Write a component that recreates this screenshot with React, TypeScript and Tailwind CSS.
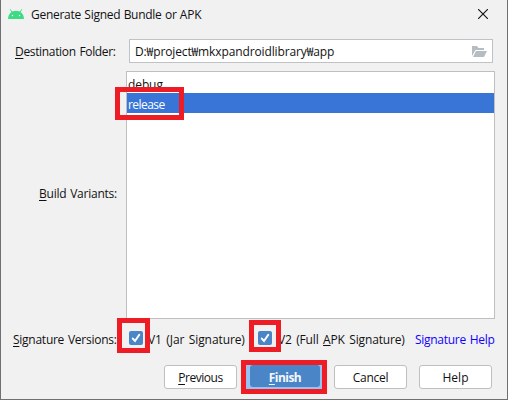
import type { ReactNode } from "react";

function Label({ k, children, className = "" }: { k?: string; children?: ReactNode; className?: string }) {
  return (
    <span className={"block whitespace-nowrap " + className}>
      {k && <u className="underline decoration-1 underline-offset-2">{k}</u>}
      {children}
    </span>
  );
}

function Check({ className = "" }: { className?: string }) {
  return (
    <span className={"block size-[14px] shrink-0 rounded-[2px] bg-[#4a86c7] " + className}>
      <svg viewBox="0 0 14 14" className="size-[14px]" fill="none" stroke="#fff" strokeWidth="2" strokeLinecap="round">
        <path d="M3.800 7.600 6 10 10.300 3.800" />
      </svg>
    </span>
  );
}

const btn = "flex h-6 w-[73px] shrink-0 items-center justify-center rounded-[3px] border border-[#bfbfbf] bg-white pt-0.5";

export default function App() {
  return (
    <div className="relative flex h-[400px] w-[508px] flex-col overflow-hidden border-x border-b border-[#707070] bg-[#f1f1f1] font-['Open_Sans','Noto_Sans_CJK_KR',sans-serif] text-[12px] leading-4 text-[#111]">
      <header className="flex h-[39px] shrink-0 items-start pl-[7px] pr-[19px]">
        <svg viewBox="0 0 16 10" className="mt-[9px] h-[10px] w-4 shrink-0">
          <path d="M0 10C.3 5 3.200 1.800 8 1.800S15.700 5 16 10Z" fill="#3ddc84" />
          <path d="M2.200 .2 4.400 4M13.800 .2 11.600 4" stroke="#3ddc84" strokeWidth=".9" />
          <circle cx="4.500" cy="6.500" r=".7" fill="#fff" />
          <circle cx="11.500" cy="6.500" r=".7" fill="#fff" />
        </svg>
        <Label className="ml-[7px] mt-[7px] tracking-[-0.27px] [word-spacing:0.5px]">Generate Signed Bundle or APK</Label>
        <svg viewBox="0 0 10 10" className="ml-auto mt-[9px] size-[10px]" stroke="#111" strokeWidth="1.100">
          <path d="M0 0 10 10M10 0 0 10" />
        </svg>
      </header>
      <div className="flex h-6 shrink-0 pl-[14px]">
        <Label k="D" className="w-[114px] pt-[5px] tracking-[-0.34px] [word-spacing:1px]">estination Folder:</Label>
        <div className="flex w-[364px] items-center border border-[#bfc3c5] bg-white pl-[5px] pr-[5px]">
          <Label className="pt-0.5 tracking-[-0.12px]">D:₩project₩mkxpandroidlibrary₩app</Label>
          <svg viewBox="0 0 15 11" className="ml-auto h-[11px] w-[15px]" fill="#b5bdc2">
            <path d="M0 0H5L6.500 2H12V4H3.500L0 10Z" />
            <path d="M4 5H15L12 11H1Z" />
          </svg>
        </div>
      </div>
      <div className="mt-2 flex h-[248px] shrink-0">
        <Label k="B" className="w-[125px] pl-[38px] pt-[115px] tracking-[-0.24px] [word-spacing:1px]">uild Variants:</Label>
        <div className="w-[369px] border border-[#bfbfbf] bg-white pt-[1px]">
          <Label className="h-5 pl-px pt-[4px] tracking-[-0.1px]">debug</Label>
          <Label className="h-5 bg-[#3875d7] pl-px pt-[4px] tracking-[-0.55px] text-white">release</Label>
        </div>
      </div>
      <div className="flex h-[45px] shrink-0 items-start pl-3 pt-[13px]">
        <Label k="S" className="w-[116px] tracking-[-0.26px] [word-spacing:1px]">ignature Versions:</Label>
        <Check className="-mt-px" />
        <Label className="ml-[5px] w-[110px] tracking-[-0.1px] [word-spacing:1.500px]">V1 (<u>J</u>ar Signature)</Label>
        <Check className="-mt-px" />
        <Label className="ml-[6px] w-[137px] tracking-[-0.15px] [word-spacing:1.500px]">V2 (Full <u>A</u>PK Signature)</Label>
        <Label className="tracking-[-0.28px] [word-spacing:1px] text-[#1000ff]">Signature Help</Label>
      </div>
      <div className="mt-px flex pl-[163px]">
        <div className={btn}><Label k="P" className="tracking-[-0.45px]">revious</Label></div>
        <div className="ml-[9px] flex h-6 w-[76px] shrink-0 items-center justify-center bg-[#97c3f3] pb-[2px] pl-1 pr-[2px]">
          <div className="flex h-[22px] w-full items-center justify-center rounded-[3px] bg-[#4a86c7] pt-[3px] font-bold text-[#f4f8fc]"><Label k="F" className="tracking-[-0.55px]">inish</Label></div>
        </div>
        <div className={btn + " ml-3"}><Label className="tracking-[-0.3px]">Cancel</Label></div>
        <div className={btn + " ml-3"}><Label>Help</Label></div>
      </div>
      <div className="absolute left-[114px] top-[87px] h-[33px] w-[69px] border-[5px] border-[#ee1c24]" />
      <div className="absolute left-[116px] top-[318px] h-[35px] w-[33px] border-[5px] border-[#ee1c24]" />
      <div className="absolute left-[248px] top-[320px] h-8 w-8 border-[5px] border-[#ee1c24]" />
      <div className="absolute left-[240px] top-[360px] h-[34px] w-[86px] border-[5px] border-[#ee1c24]" />
    </div>
  );
}
